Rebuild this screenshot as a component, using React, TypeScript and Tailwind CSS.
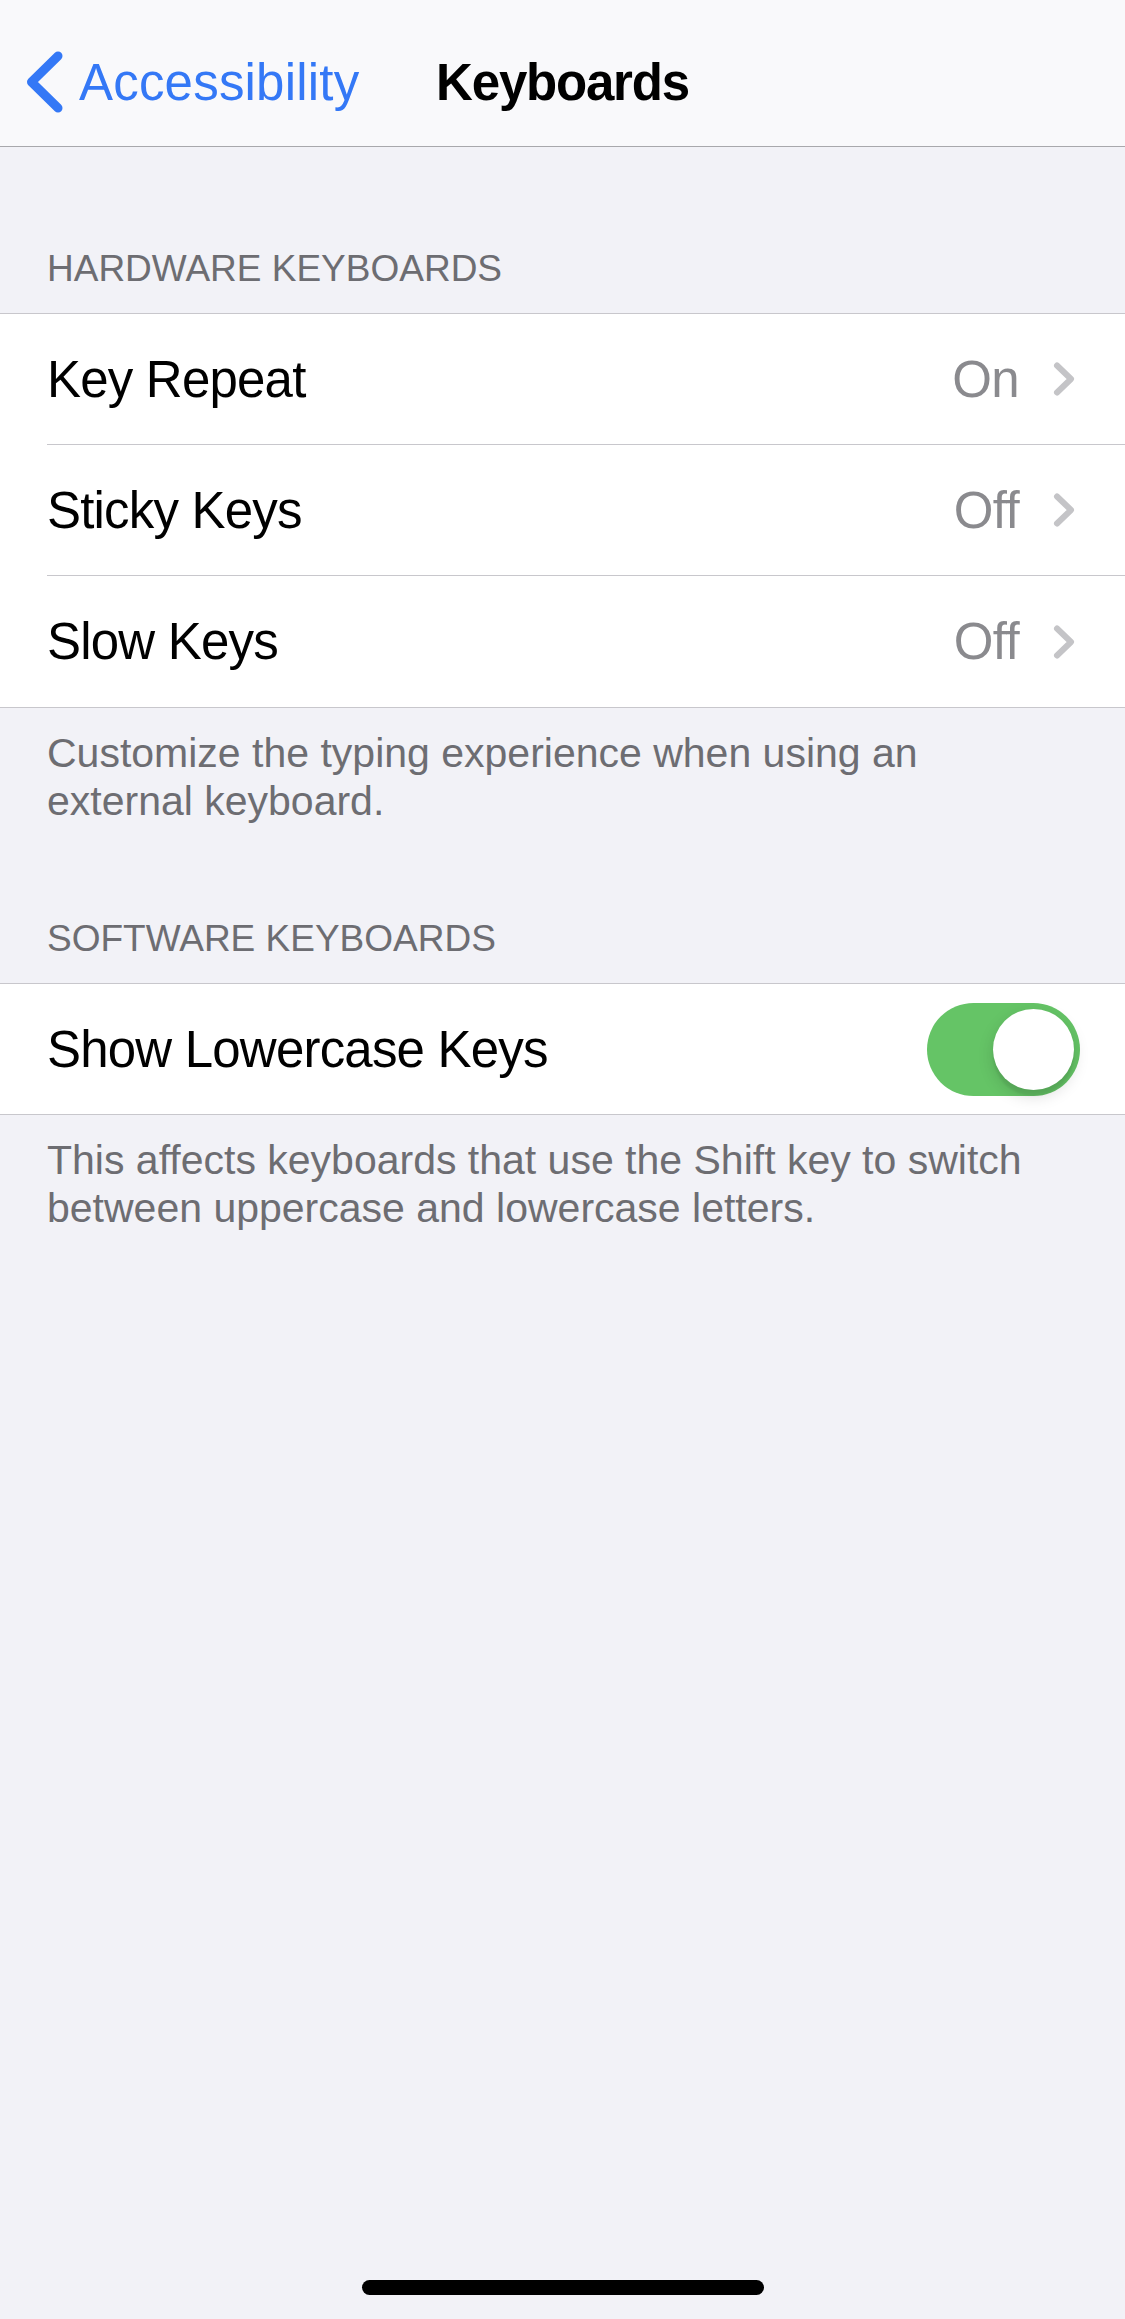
import React from "react";

const font = { fontFamily: '"Liberation Sans", Arial, sans-serif' };

function BackChevron() {
  return (
    <svg width="44" height="72" viewBox="0 0 44 72" fill="none" className="shrink-0">
      <path d="M35 10 L8.5 36 L35 62" stroke="#3478f6" strokeWidth="9" strokeLinecap="round" strokeLinejoin="round" />
    </svg>
  );
}

function Disclosure() {
  return (
    <svg width="24" height="36" viewBox="0 0 24 36" fill="none" className="shrink-0">
      <path d="M5 4.5 L19 18 L5 31.5" stroke="#c4c4c7" strokeWidth="6" strokeLinecap="round" strokeLinejoin="round" />
    </svg>
  );
}

function Toggle({ on }: { on: boolean }) {
  return (
    <div className={`w-[153px] h-[93px] rounded-full p-[6px] flex ${on ? "bg-[#65c466] justify-end" : "bg-[#e9e9eb] justify-start"}`}>
      <div className="w-[81px] h-[81px] rounded-full bg-white shadow-[0_6px_16px_rgba(0,0,0,0.15),0_6px_2px_rgba(0,0,0,0.06)]" />
    </div>
  );
}

interface Row {
  label: string;
  value: string;
}

const hardware: Row[] = [
  { label: "Key Repeat", value: "On" },
  { label: "Sticky Keys", value: "Off" },
  { label: "Slow Keys", value: "Off" },
];

function SectionHeader({ children }: { children: React.ReactNode }) {
  return (
    <div className="px-[47px] text-[37px] leading-[44px] text-[#6d6d72] uppercase">{children}</div>
  );
}

function Footer({ children }: { children: React.ReactNode }) {
  return (
    <div className="pl-[47px] pr-[40px] pt-[21px] text-[41px] leading-[48px] text-[#6d6d72]">{children}</div>
  );
}

export default function App() {
  return (
    <div style={font} className="min-h-[2319px] w-[1125px] bg-[#f2f2f7] flex flex-col">
      {/* nav bar */}
      <div className="h-[147px] bg-[#f9f9fb] border-b border-[#a8a8ac] pt-[46px]">
        <div className="h-[72px] grid grid-cols-[1fr_auto_1fr] items-center">
          <div className="flex items-center pl-[23px]">
            <BackChevron />
            <span className="ml-[12px] text-[51px] leading-[51px] tracking-[0.2px] text-[#3478f6]">Accessibility</span>
          </div>
          <span className="text-[51px] leading-[51px] font-bold tracking-[-1.2px] text-black">Keyboards</span>
          <div />
        </div>
      </div>

      <div className="mt-[100px] mb-[22px]">
        <SectionHeader>Hardware Keyboards</SectionHeader>
      </div>
      <div className="bg-white border-y border-[#c8c7cc]">
        {hardware.map((row, i) => (
          <div key={row.label} className="pl-[47px]">
            <div className={`h-[131px] flex items-center pr-[49px] ${i < hardware.length - 1 ? "border-b border-[#c8c7cc]" : ""}`}>
              <span className="flex-1 text-[51px] leading-[51px] tracking-[-0.8px] text-black">{row.label}</span>
              <span className="text-[51px] leading-[51px] tracking-[-0.6px] text-[#8a8a8e] mr-[33px]">{row.value}</span>
              <Disclosure />
            </div>
          </div>
        ))}
      </div>
      <Footer>
        Customize the typing experience when using an
        <br />
        external keyboard.
      </Footer>

      <div className="mt-[92px] mb-[22px]">
        <SectionHeader>Software Keyboards</SectionHeader>
      </div>
      <div className="bg-white border-y border-[#c8c7cc]">
        <div className="h-[130px] flex items-center pl-[47px] pr-[45px]">
          <span className="flex-1 text-[51px] leading-[51px] tracking-[-0.8px] text-black">Show Lowercase Keys</span>
          <Toggle on />
        </div>
      </div>
      <Footer>
        This affects keyboards that use the Shift key to switch
        <br />
        between uppercase and lowercase letters.
      </Footer>

      <div className="flex-1" />
      <div className="flex justify-center pb-[24px]">
        <div className="w-[402px] h-[15px] rounded-full bg-black" />
      </div>
    </div>
  );
}
